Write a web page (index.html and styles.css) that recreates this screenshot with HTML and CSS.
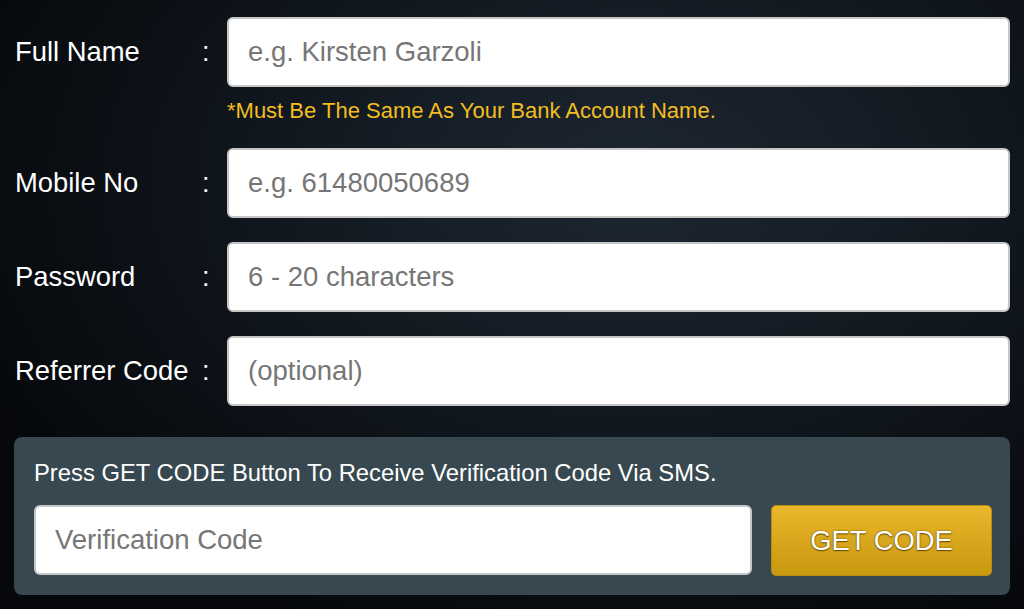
FILE: index.html
```html
<!DOCTYPE html>
<html lang="en">
<head>
  <meta charset="UTF-8" />
  <meta name="viewport" content="width=device-width, initial-scale=1.0"/>
  <title>Register</title>
  <link rel="stylesheet" href="styles.css">
</head>
<body>
  <form class="register" onsubmit="return false;">
    <div class="row">
      <label for="fullname">Full Name</label>
      <span class="colon">:</span>
      <input type="text" id="fullname" placeholder="e.g. Kirsten Garzoli" />
    </div>
    <p class="hint">*Must Be The Same As Your Bank Account Name.</p>

    <div class="row">
      <label for="mobile">Mobile No</label>
      <span class="colon">:</span>
      <input type="tel" id="mobile" placeholder="e.g. 61480050689" />
    </div>

    <div class="row">
      <label for="password">Password</label>
      <span class="colon">:</span>
      <input type="password" id="password" placeholder="6 - 20 characters" />
    </div>

    <div class="row">
      <label for="referrer">Referrer Code</label>
      <span class="colon">:</span>
      <input type="text" id="referrer" placeholder="(optional)" />
    </div>

    <!-- SMS verification -->
    <div class="verify">
      <p>Press GET CODE Button To Receive Verification Code Via SMS.</p>
      <div class="verify-row">
        <input type="text" placeholder="Verification Code" />
        <button type="button">GET CODE</button>
      </div>
    </div>
  </form>
</body>
</html>
```

FILE: styles.css
```css
html, body { height: 100%; }
body {
  margin: 0;
  font-family: "Liberation Sans", Arial, sans-serif;
  color: #fff;
  background: radial-gradient(ellipse 70% 80% at 62% 30%, #1d2731 0%, #121921 45%, #06080b 100%);
  overflow: hidden;
}
.register { padding: 17px 14px 0 14px; }
.row { display: grid; grid-template-columns: 188px 25px 1fr; align-items: center; margin-bottom: 24px; }
.row label { padding-left: 1px; font-size: 27.4px; white-space: nowrap; }
.colon { font-size: 27px; }
input {
  box-sizing: border-box;
  width: 100%;
  height: 70px;
  padding: 0 19px;
  font-family: inherit;
  font-size: 27.5px;
  color: #333;
  background: #fff;
  border: 2px solid #c6c6c6;
  border-radius: 6px;
  outline: none;
}
input::placeholder { color: #767676; }
.hint { margin: -13px 0 24px 213px; font-size: 22px; line-height: 26px; color: #f2be22; }
.verify { margin-top: 31px; background: #374850; border-radius: 8px; padding: 18px 18px 19px 20px; }
.verify p { margin: 0 0 14px 0; font-size: 23.8px; line-height: 36px; }
.verify-row { display: flex; gap: 19px; }
.verify-row input { flex: 1; }
.verify-row button {
  width: 221px;
  height: 71px;
  font-family: inherit;
  font-size: 27.4px;
  color: #fff;
  background: linear-gradient(#ebb72c, #c8980f);
  border: 1px solid #b98e10;
  border-radius: 5px;
  text-shadow: 0 0 2px #6b4e00, 0 1px 1px #6b4e00;
  cursor: pointer;
}
```
